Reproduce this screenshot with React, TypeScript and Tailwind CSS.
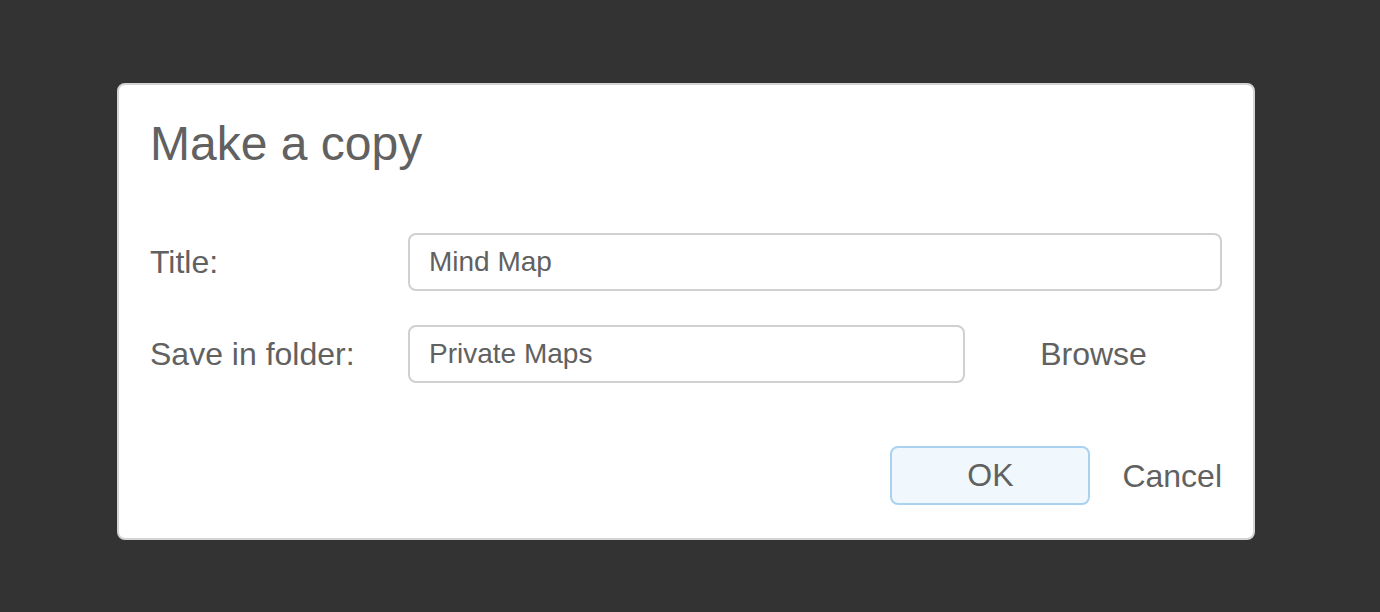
import { useState } from 'react';

const App = () => {
  const [title, setTitle] = useState('Mind Map');
  const [folder, setFolder] = useState('Private Maps');

  return (
    <div className="min-h-[612px] w-full bg-[#333333] pt-[83px] font-['Liberation_Sans',Arial,sans-serif] text-[#616161]">
      <div className="ml-[117px] w-[1138px] rounded-[8px] border-2 border-[#d4d4d4] bg-white px-[31px] pt-[30px] pb-[32px]">
        <h1 className="text-[48px] leading-[58px] font-normal">Make a copy</h1>

        <div className="mt-[60px] flex flex-col gap-[34px]">
          <div className="flex items-center">
            <label className="w-[258px] shrink-0 text-[32px] leading-[58px]">Title:</label>
            <input
              type="text"
              value={title}
              onChange={(e) => setTitle(e.target.value)}
              className="h-[58px] flex-1 rounded-[8px] border-2 border-[#d0d0d0] px-[19px] text-[28px] text-[#616161] outline-none"
            />
          </div>

          <div className="flex items-center">
            <label className="w-[258px] shrink-0 text-[32px] leading-[58px]">Save in folder:</label>
            <input
              type="text"
              value={folder}
              onChange={(e) => setFolder(e.target.value)}
              className="h-[58px] w-[557px] rounded-[8px] border-2 border-[#d0d0d0] px-[19px] text-[28px] text-[#616161] outline-none"
            />
            <button className="flex-1 text-center text-[32px] leading-[58px]">Browse</button>
          </div>
        </div>

        <div className="mt-[61px] flex items-center justify-end gap-[32px]">
          <button className="h-[59px] w-[200px] rounded-[8px] border-2 border-[#a9d2f0] bg-[#f0f8fd] text-[32px] leading-[55px]">
            OK
          </button>
          <button className="text-[32px] leading-[59px] pt-[3px]">Cancel</button>
        </div>
      </div>
    </div>
  );
};

export default App;
